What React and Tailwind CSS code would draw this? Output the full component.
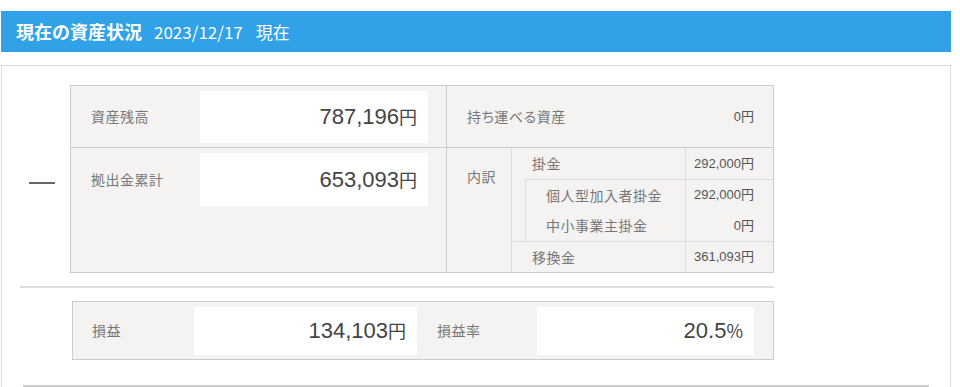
import React from 'react';

const asOf = '2023/12/17';

const breakdown = {
  contribution: '292,000',
  personal: '292,000',
  employer: '0',
  transfer: '361,093',
};

const label = 'text-[14px] tracking-[0.5px] text-[#777]';

// white box holding a big right-aligned figure with its unit
function AmountBox({ value, unit, className }) {
  return (
    <div className={`flex items-center justify-end bg-white pr-[11px] text-[#444] ${className}`}>
      <span>
        <span className="font-['Liberation_Sans',sans-serif] text-[22px]">{value}</span>
        <span className="text-[18px]">{unit}</span>
      </span>
    </div>
  );
}

function Amount({ value }) {
  return (
    <span className="font-['Liberation_Sans','Noto_Sans_CJK_JP',sans-serif] text-[13px] text-[#555]">
      {value}円
    </span>
  );
}

// one line of the 内訳 table: label cell + value cell
function SubRow({ name, value, className = '' }) {
  return (
    <div className={`flex ${className}`}>
      <div className={`flex flex-1 items-center pl-5 ${label}`}>{name}</div>
      <div className="flex w-[88px] items-center justify-end border-l border-[#ddd] pr-[19px]">
        <Amount value={value} />
      </div>
    </div>
  );
}

export default function App() {
  return (
    <div className="min-h-[387px] bg-white pt-[11px] font-['Noto_Sans_CJK_JP',sans-serif]">
      <div className="ml-[1px] w-[950px]">
        {/* Title bar */}
        <div className="flex h-[41px] items-center bg-[#31a1e8] pl-[15px] text-white">
          <h2 className="text-[18px] font-bold">現在の資産状況</h2>
          <span className="ml-3 text-[17px]">{asOf}</span>
          <span className="ml-[13px] text-[17px]">現在</span>
        </div>

        <div className="mt-[13px] border border-[#ddd] pb-10 pt-[19px]">
          {/* Balance / contributions */}
          <div className="flex items-start">
            <div className="w-[68px] pl-[27px] pt-[97px]">
              <div className="h-[2px] w-[26px] bg-[#666]" />
            </div>

            <div className="flex w-[704px] border border-[#ccc] bg-[#f4f3f2]">
              <div className="flex w-[375px] flex-col">
                <div className="flex h-[62px] items-center border-b border-[#ccc] pl-5">
                  <div className={`w-[109px] ${label}`}>資産残高</div>
                  <AmountBox value="787,196" unit="円" className="h-[52px] w-[228px]" />
                </div>
                <div className="flex h-[124px] items-start pl-5 pt-[5px]">
                  <div className={`flex h-[53px] w-[109px] items-center ${label}`}>拠出金累計</div>
                  <AmountBox value="653,093" unit="円" className="h-[53px] w-[228px]" />
                </div>
              </div>

              <div className="flex flex-1 flex-col border-l border-[#ccc]">
                <div className="flex h-[62px] items-center justify-between border-b border-[#ccc] pl-5 pr-[19px]">
                  <span className={`[font-feature-settings:'palt'] ${label}`}>持ち運べる資産</span>
                  <Amount value="0" />
                </div>
                <div className="flex h-[124px]">
                  <div className={`w-[64px] pl-5 pt-[18px] leading-5 ${label}`}>内訳</div>
                  <div className="flex flex-1 flex-col border-l border-[#ddd]">
                    <SubRow name="掛金" value={breakdown.contribution} className="h-[31px]" />
                    <div className="ml-[13px] border-l border-t border-[#ddd]">
                      <SubRow name="個人型加入者掛金" value={breakdown.personal} className="h-[30px]" />
                      <SubRow name="中小事業主掛金" value={breakdown.employer} className="h-[31px]" />
                    </div>
                    <SubRow name="移換金" value={breakdown.transfer} className="flex-1 border-t border-[#ddd]" />
                  </div>
                </div>
              </div>
            </div>
          </div>

          <div className="ml-[18px] mt-[13px] h-[2px] w-[754px] bg-[#ddd]" />

          {/* Profit / loss */}
          <div className="ml-[70px] mt-[13px] flex h-[59px] w-[702px] items-center border border-[#ccc] bg-[#f4f3f2] pl-[19px] pr-[19px]">
            <div className={`w-[102px] ${label}`}>損益</div>
            <AmountBox value="134,103" unit="円" className="h-[48px] w-[223px]" />
            <div className={`w-[120px] pl-5 ${label}`}>損益率</div>
            <AmountBox value="20.5" unit="%" className="h-[48px] flex-1" />
          </div>

          <div className="ml-[21px] mt-[25px] h-[2px] w-[906px] bg-[#ccc]" />
        </div>
      </div>
    </div>
  );
}
